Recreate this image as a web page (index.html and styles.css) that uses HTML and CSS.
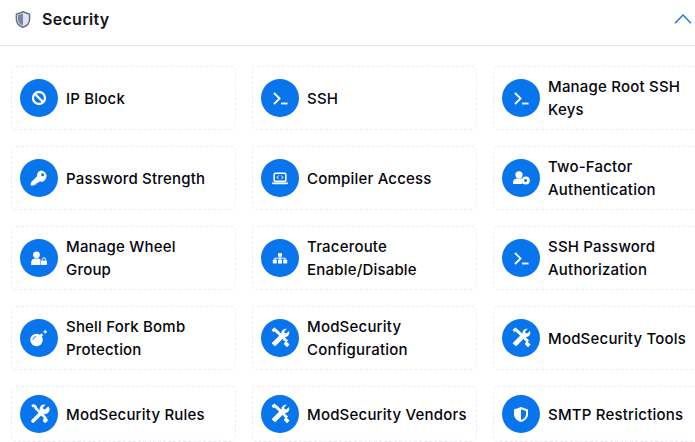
FILE: index.html
```html
<!DOCTYPE html>
<html lang="en">
<head>
<meta charset="utf-8">
<title>Security</title>
<link rel="stylesheet" href="styles.css">
</head>
<body>
<svg class="defs" width="0" height="0" aria-hidden="true">
  <symbol id="i-ban" viewBox="0 0 38 38"><circle cx="19" cy="19" r="6" fill="none" stroke="#fff" stroke-width="2.3"/><path d="M15 15l8 8" stroke="#fff" stroke-width="2.3"/></symbol>
  <symbol id="i-term" viewBox="0 0 38 38"><path d="M13 14l5.6 5.5L13 25" fill="none" stroke="#fff" stroke-width="1.8"/><path d="M20 24.500h6.500" stroke="#fff" stroke-width="1.800"/></symbol>
  <symbol id="i-key" viewBox="0 0 38 38"><path fill="#fff" fill-rule="evenodd" d="M21 11.600a5.600 5.600 0 1 1-1.600 11l-1.400 1.400h-1.600v1.600h-1.800l-.8.8h-3v-3l6.200-6.200A5.600 5.600 0 0 1 21 11.600zm1.600 2.600a1.500 1.500 0 1 0 0 3 1.500 1.500 0 0 0 0-3z"/></symbol>
  <symbol id="i-laptop" viewBox="0 0 38 38"><rect x="13.200" y="14.200" width="11.600" height="8.200" rx="1" fill="none" stroke="#fff" stroke-width="1.600"/><path d="M11 23.400h16v.6a1.200 1.200 0 0 1-1.200 1.200H12.200A1.200 1.200 0 0 1 11 24z" fill="#fff"/><path d="M17.600 16.600L16 18.300l1.600 1.700M20.400 16.600l1.600 1.700-1.600 1.700" fill="none" stroke="#fff" stroke-width="1"/></symbol>
  <symbol id="i-ulock" viewBox="0 0 38 38"><circle cx="16.500" cy="15.800" r="3.400" fill="#fff"/><path d="M11.200 26v-2.600c0-2.400 1.800-4 4-4h2.600c1.200 0 2.200.4 2.700 1v5.600z" fill="#fff"/><rect x="21" y="21.500" width="6" height="4.600" rx=".8" fill="#fff"/><path d="M22.400 21.600v-1.200a1.600 1.600 0 0 1 3.200 0v1.200" fill="none" stroke="#fff" stroke-width="1"/></symbol>
  <symbol id="i-bomb" viewBox="0 0 38 38"><circle cx="16.500" cy="21" r="6.200" fill="#fff"/><path d="M20 17.500l2.300-2.300" stroke="#fff" stroke-width="2.600"/><path d="M25.200 11v3.600M23.400 12.800H27" stroke="#fff" stroke-width="1.300"/><path d="M12.800 20.800a3.600 3.600 0 0 1 3.400-3.200" fill="none" stroke="#0875ec" stroke-width=".9"/></symbol>
  <symbol id="i-tools" viewBox="0 0 38 38"><path d="M12 11.400l1.600-.9 2 1.200.3 1.700 10 10" fill="none" stroke="#fff" stroke-width="2.600"/><path d="M23.600 23.400l2.600-.6 2 2.400-3 3-2.400-2.200z" fill="#fff"/><path d="M13 26l9.600-9.600" stroke="#fff" stroke-width="3.600" stroke-linecap="round"/><path fill="#fff" d="M27.700 11.800l-2.600 2.600-1.700-.4-.4-1.700 2.600-2.600a4.600 4.600 0 0 0-5.800 5.800l3 3a4.600 4.600 0 0 0 5.900-6.700z"/></symbol>
  <symbol id="i-tools2" viewBox="0 0 38 38"><path d="M11.500 12l2-1.600 3 2.600 9.500 9.500" fill="none" stroke="#fff" stroke-width="3"/><path d="M23 24l2.400-1.400 3.200 3-2.600 2.600-3-3z" fill="#fff"/><path d="M12 25.500l10.500-10.500" stroke="#fff" stroke-width="3.800"/><path fill="#fff" d="M28 12l-2.800 2.400-1.600-.5-.4-1.500 2.600-2.600a4.600 4.600 0 0 0-5.400 5.200l-9 8.800 2.800 3.400 9-9a4.600 4.600 0 0 0 4.800-6.200z"/></symbol>
  <symbol id="i-site" viewBox="0 0 38 38"><g fill="#fff"><rect x="17" y="14" width="4" height="3.800" rx=".5"/><rect x="11.800" y="20.600" width="4" height="3.800" rx=".5"/><rect x="17" y="20.600" width="4" height="3.800" rx=".5"/><rect x="22.200" y="20.600" width="4" height="3.800" rx=".5"/></g><path d="M13.800 20.600v-1.400h10.400v1.400M19 17.800v2.800" fill="none" stroke="#fff" stroke-width="1"/></symbol>
  <symbol id="i-ushield" viewBox="0 0 38 38"><circle cx="17" cy="15.800" r="3.600" fill="#fff"/><path d="M11 25v-1.600c0-2.400 1.900-4 4-4h4c.6 0 1 .1 1.400.3v5.300z" fill="#fff"/><circle cx="23.800" cy="21.400" r="4" fill="#fff"/><circle cx="23.600" cy="21.400" r="1.500" fill="#0875ec"/></symbol>
  <symbol id="i-shield" viewBox="0 0 38 38"><path d="M19 12l7 2.600v4.600c0 3.700-3 6.600-7 7.800-4-1.200-7-4.100-7-7.800v-4.600z" fill="#fff"/><path d="M19 14.200l5 1.900v3.200c0 2.700-2.100 4.800-5 5.600z" fill="#0875ec"/></symbol>
</svg>
<section class="panel">
  <header class="panel-head">
    <div class="panel-title">
      <svg class="head-icon" width="16" height="17" viewBox="0 0 16 17"><path d="M8 .8l6.600 2.400v5.200c0 3.600-2.800 6.400-6.600 7.800C4.200 14.800 1.400 12 1.400 8.400V3.200z" fill="#dfe3ee" stroke="#6c7180" stroke-width="1.500"/><path d="M8 2.400v12.200C5 13.400 3 11.200 3 8.400V4.200z" fill="#7886ac"/></svg>
      <h2>Security</h2>
    </div>
    <svg class="chevron" width="18" height="10" viewBox="0 0 18 10"><path d="M1 9.300L9 1l8 8.300" fill="none" stroke="#1b74e4" stroke-width="1.400"/></svg>
  </header>
  <div class="grid">
    <a class="card"><span class="badge"><svg><use href="#i-ban"/></svg></span><span class="label">IP Block</span></a>
    <a class="card"><span class="badge"><svg><use href="#i-term"/></svg></span><span class="label">SSH</span></a>
    <a class="card"><span class="badge"><svg><use href="#i-term"/></svg></span><span class="label">Manage Root SSH Keys</span></a>
    <a class="card"><span class="badge"><svg><use href="#i-key"/></svg></span><span class="label">Password Strength</span></a>
    <a class="card"><span class="badge"><svg><use href="#i-laptop"/></svg></span><span class="label">Compiler Access</span></a>
    <a class="card"><span class="badge"><svg><use href="#i-ushield"/></svg></span><span class="label">Two-Factor Authentication</span></a>
    <a class="card"><span class="badge"><svg><use href="#i-ulock"/></svg></span><span class="label">Manage Wheel<br>Group</span></a>
    <a class="card"><span class="badge"><svg><use href="#i-site"/></svg></span><span class="label">Traceroute Enable/Disable</span></a>
    <a class="card"><span class="badge"><svg><use href="#i-term"/></svg></span><span class="label">SSH Password Authorization</span></a>
    <a class="card"><span class="badge"><svg><use href="#i-bomb"/></svg></span><span class="label">Shell Fork Bomb Protection</span></a>
    <a class="card"><span class="badge"><svg><use href="#i-tools2"/></svg></span><span class="label">ModSecurity Configuration</span></a>
    <a class="card"><span class="badge"><svg><use href="#i-tools2"/></svg></span><span class="label">ModSecurity Tools</span></a>
    <a class="card"><span class="badge"><svg><use href="#i-tools"/></svg></span><span class="label">ModSecurity Rules</span></a>
    <a class="card"><span class="badge"><svg><use href="#i-tools2"/></svg></span><span class="label">ModSecurity Vendors</span></a>
    <a class="card"><span class="badge"><svg><use href="#i-shield"/></svg></span><span class="label">SMTP Restrictions</span></a>
  </div>
</section>
</body>
</html>
```
FILE: styles.css
```css
html, body {
  margin: 0;
  height: 442px;
  overflow: hidden;
  background: #fff;
}
body {
  font-family: Inter, "Open Sans", "Liberation Sans", sans-serif;
  color: #05050c;
}
.defs {
  display: block;
  height: 0;
}
.panel-head {
  display: flex;
  align-items: center;
  justify-content: space-between;
  height: 38px;
  padding: 0 3px 7px 15px;
  border-bottom: 1px solid #e5e6ea;
}
.panel-title {
  display: flex;
  align-items: center;
  gap: 11px;
}
.panel-title h2 {
  margin: 0;
  font-size: 16px;
  font-weight: 600;
  letter-spacing: .3px;
  color: #14141c;
}
.grid {
  display: grid;
  grid-template-columns: repeat(3, 225px);
  gap: 16px;
  padding: 20px 11px;
  width: max-content;
}
.card {
  display: flex;
  align-items: center;
  gap: 8px;
  padding: 8px;
  border: 1px dashed #ebebf8;
  border-radius: 5px;
}
.badge {
  flex: none;
  width: 38px;
  height: 38px;
  border-radius: 50%;
  background: #0875ec;
}
.badge svg {
  display: block;
  width: 38px;
  height: 38px;
}
.label {
  font-size: 15px;
  font-weight: 450;
  line-height: 23px;
  letter-spacing: .2px;
}
```
